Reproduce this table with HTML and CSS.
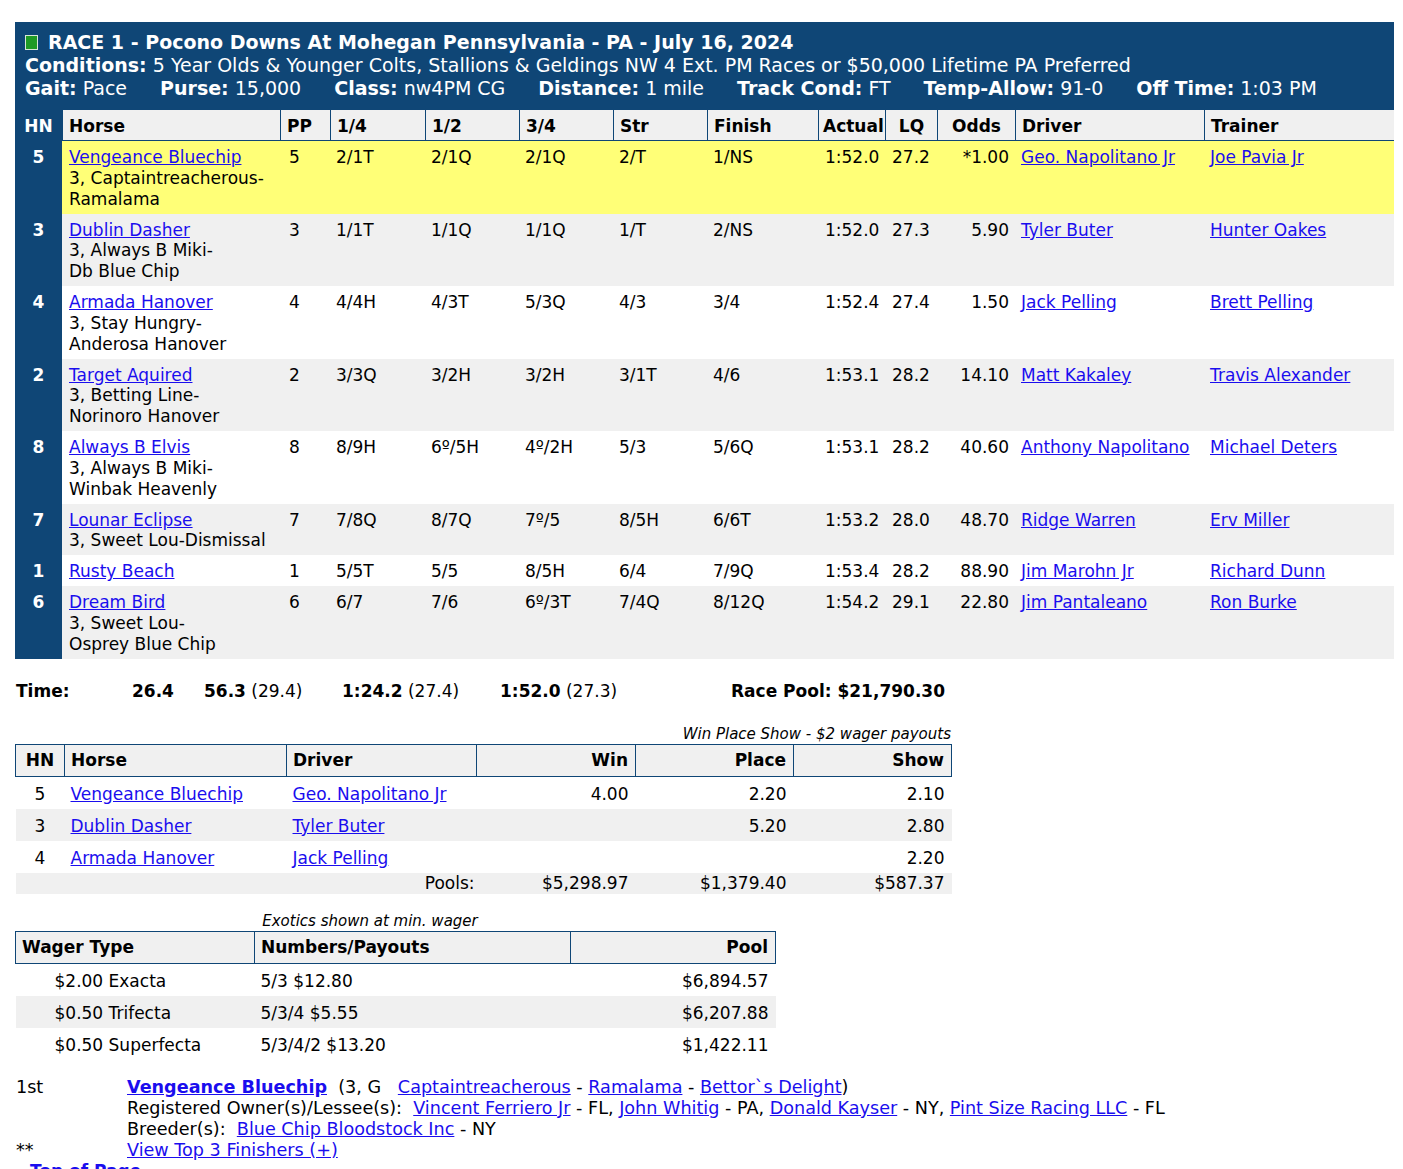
FILE: index.html
```html
<!DOCTYPE html>
<html lang="en">
<head>
<meta charset="utf-8">
<title>Race 1 - Pocono Downs At Mohegan Pennsylvania</title>
<link rel="stylesheet" href="styles.css">
</head>
<body>
<div class="page">
  <div class="race">
    <div class="race-head">
      <div class="title"><span class="flag"></span><span>RACE 1 - Pocono Downs At Mohegan Pennsylvania - PA - July 16, 2024</span></div>
      <div><b>Conditions:</b> 5 Year Olds &amp; Younger Colts, Stallions &amp; Geldings NW 4 Ext. PM Races or $50,000 Lifetime PA Preferred</div>
      <div class="facts">
        <span><b>Gait:</b> Pace</span>
        <span><b>Purse:</b> 15,000</span>
        <span><b>Class:</b> nw4PM CG</span>
        <span><b>Distance:</b> 1 mile</span>
        <span><b>Track Cond:</b> FT</span>
        <span><b>Temp-Allow:</b> 91-0</span>
        <span><b>Off Time:</b> 1:03 PM</span>
      </div>
    </div>
    <table class="results">
      <colgroup>
        <col class="c-hn"><col class="c-horse"><col class="c-pp"><col class="c-q"><col class="c-h"><col class="c-t"><col class="c-str"><col class="c-fin"><col class="c-act"><col class="c-lq"><col class="c-odds"><col class="c-drv"><col class="c-trn">
      </colgroup>
      <thead>
        <tr>
          <th class="hn">HN</th><th>Horse</th><th>PP</th><th>1/4</th><th>1/2</th><th>3/4</th><th>Str</th><th>Finish</th><th class="tight">Actual</th><th class="center">LQ</th><th class="center">Odds</th><th>Driver</th><th>Trainer</th>
        </tr>
      </thead>
      <tbody>
        <tr class="win">
          <td class="hn">5</td>
          <td><a href="#">Vengeance Bluechip</a><br>3, Captaintreacherous-<span class="dam">Ramalama</span></td>
          <td class="pp">5</td><td>2/1T</td><td>2/1Q</td><td>2/1Q</td><td>2/T</td><td>1/NS</td><td class="act">1:52.0</td><td class="lq">27.2</td><td class="odds">*1.00</td>
          <td><a href="#">Geo. Napolitano Jr</a></td><td><a href="#">Joe Pavia Jr</a></td>
        </tr>
        <tr class="alt">
          <td class="hn">3</td>
          <td><a href="#">Dublin Dasher</a><br>3, Always B Miki-<span class="dam">Db Blue Chip</span></td>
          <td class="pp">3</td><td>1/1T</td><td>1/1Q</td><td>1/1Q</td><td>1/T</td><td>2/NS</td><td class="act">1:52.0</td><td class="lq">27.3</td><td class="odds">5.90</td>
          <td><a href="#">Tyler Buter</a></td><td><a href="#">Hunter Oakes</a></td>
        </tr>
        <tr>
          <td class="hn">4</td>
          <td><a href="#">Armada Hanover</a><br>3, Stay Hungry-<span class="dam">Anderosa Hanover</span></td>
          <td class="pp">4</td><td>4/4H</td><td>4/3T</td><td>5/3Q</td><td>4/3</td><td>3/4</td><td class="act">1:52.4</td><td class="lq">27.4</td><td class="odds">1.50</td>
          <td><a href="#">Jack Pelling</a></td><td><a href="#">Brett Pelling</a></td>
        </tr>
        <tr class="alt">
          <td class="hn">2</td>
          <td><a href="#">Target Aquired</a><br>3, Betting Line-<span class="dam">Norinoro Hanover</span></td>
          <td class="pp">2</td><td>3/3Q</td><td>3/2H</td><td>3/2H</td><td>3/1T</td><td>4/6</td><td class="act">1:53.1</td><td class="lq">28.2</td><td class="odds">14.10</td>
          <td><a href="#">Matt Kakaley</a></td><td><a href="#">Travis Alexander</a></td>
        </tr>
        <tr>
          <td class="hn">8</td>
          <td><a href="#">Always B Elvis</a><br>3, Always B Miki-<span class="dam">Winbak Heavenly</span></td>
          <td class="pp">8</td><td>8/9H</td><td>6º/5H</td><td>4º/2H</td><td>5/3</td><td>5/6Q</td><td class="act">1:53.1</td><td class="lq">28.2</td><td class="odds">40.60</td>
          <td><a href="#">Anthony Napolitano</a></td><td><a href="#">Michael Deters</a></td>
        </tr>
        <tr class="alt">
          <td class="hn">7</td>
          <td><a href="#">Lounar Eclipse</a><br>3, Sweet Lou-<span class="dam">Dismissal</span></td>
          <td class="pp">7</td><td>7/8Q</td><td>8/7Q</td><td>7º/5</td><td>8/5H</td><td>6/6T</td><td class="act">1:53.2</td><td class="lq">28.0</td><td class="odds">48.70</td>
          <td><a href="#">Ridge Warren</a></td><td><a href="#">Erv Miller</a></td>
        </tr>
        <tr>
          <td class="hn">1</td>
          <td><a href="#">Rusty Beach</a></td>
          <td class="pp">1</td><td>5/5T</td><td>5/5</td><td>8/5H</td><td>6/4</td><td>7/9Q</td><td class="act">1:53.4</td><td class="lq">28.2</td><td class="odds">88.90</td>
          <td><a href="#">Jim Marohn Jr</a></td><td><a href="#">Richard Dunn</a></td>
        </tr>
        <tr class="alt">
          <td class="hn">6</td>
          <td><a href="#">Dream Bird</a><br>3, Sweet Lou-<span class="dam">Osprey Blue Chip</span></td>
          <td class="pp">6</td><td>6/7</td><td>7/6</td><td>6º/3T</td><td>7/4Q</td><td>8/12Q</td><td class="act">1:54.2</td><td class="lq">29.1</td><td class="odds">22.80</td>
          <td><a href="#">Jim Pantaleano</a></td><td><a href="#">Ron Burke</a></td>
        </tr>
      </tbody>
    </table>
  </div>

  <table class="times">
    <tr>
      <td class="t-label"><b>Time:</b></td>
      <td class="t-1"><b>26.4</b></td>
      <td class="t-2"><b>56.3</b> (29.4)</td>
      <td class="t-3"><b>1:24.2</b> (27.4)</td>
      <td class="t-4"><b>1:52.0</b> (27.3)</td>
      <td class="t-pool"><b>Race Pool: $21,790.30</b></td>
    </tr>
  </table>

  <div class="wps-caption">Win Place Show - $2 wager payouts</div>
  <table class="wps">
    <colgroup>
      <col class="w-hn"><col class="w-horse"><col class="w-drv"><col class="w-num"><col class="w-num2"><col class="w-num2">
    </colgroup>
    <thead>
      <tr><th class="center">HN</th><th>Horse</th><th>Driver</th><th class="num">Win</th><th class="num">Place</th><th class="num">Show</th></tr>
    </thead>
    <tbody>
      <tr><td class="center">5</td><td><a href="#">Vengeance Bluechip</a></td><td><a href="#">Geo. Napolitano Jr</a></td><td class="num">4.00</td><td class="num">2.20</td><td class="num">2.10</td></tr>
      <tr class="alt"><td class="center">3</td><td><a href="#">Dublin Dasher</a></td><td><a href="#">Tyler Buter</a></td><td class="num"></td><td class="num">5.20</td><td class="num">2.80</td></tr>
      <tr><td class="center">4</td><td><a href="#">Armada Hanover</a></td><td><a href="#">Jack Pelling</a></td><td class="num"></td><td class="num"></td><td class="num">2.20</td></tr>
      <tr class="alt pools"><td></td><td></td><td class="pools-label">Pools:</td><td class="num">$5,298.97</td><td class="num">$1,379.40</td><td class="num">$587.37</td></tr>
    </tbody>
  </table>

  <div class="ex-caption">Exotics shown at min. wager</div>
  <table class="exotics">
    <colgroup>
      <col class="e-type"><col class="e-num"><col class="e-pool">
    </colgroup>
    <thead>
      <tr><th>Wager Type</th><th>Numbers/Payouts</th><th class="num">Pool</th></tr>
    </thead>
    <tbody>
      <tr><td class="wager">$2.00 Exacta</td><td>5/3 $12.80</td><td class="num">$6,894.57</td></tr>
      <tr class="alt"><td class="wager">$0.50 Trifecta</td><td>5/3/4 $5.55</td><td class="num">$6,207.88</td></tr>
      <tr><td class="wager">$0.50 Superfecta</td><td>5/3/4/2 $13.20</td><td class="num">$1,422.11</td></tr>
    </tbody>
  </table>

  <div class="finishers">
    <div class="place">1st</div>
    <div><b><a href="#">Vengeance Bluechip</a></b>&nbsp;&nbsp;(3, G&nbsp;&nbsp; <a href="#">Captaintreacherous</a> - <a href="#">Ramalama</a> - <a href="#">Bettor`s Delight</a>)</div>
    <div class="place"></div>
    <div>Registered Owner(s)/Lessee(s):&nbsp; <a href="#">Vincent Ferriero Jr</a> - FL, <a href="#">John Whitig</a> - PA, <a href="#">Donald Kayser</a> - NY, <a href="#">Pint Size Racing LLC</a> - FL</div>
    <div class="place"></div>
    <div>Breeder(s):&nbsp; <a href="#">Blue Chip Bloodstock Inc</a> - NY</div>
    <div class="place">**</div>
    <div><a href="#">View Top 3 Finishers (+)</a></div>
  </div>
  <div class="toplink"><b><a href="#">Top of Page</a></b></div>
</div>
</body>
</html>
```
FILE: styles.css
```css
html, body {
  margin: 0;
  padding: 0;
  background: #ffffff;
}

body {
  font-family: "DejaVu Sans", Verdana, sans-serif;
  font-size: 17px;
  line-height: 21px;
  color: #000000;
}

a {
  color: #1a0dee;
  text-decoration: underline;
}

.page {
  padding: 22px 0 0 15px;
}

/* ---------- race box ---------- */
.race {
  width: 1379px;
  background: #0f4676;
}

.race-head {
  color: #ffffff;
  font-size: 19px;
  line-height: 23px;
  padding: 9px 10px 10px 10px;
}

.title {
  display: flex;
  align-items: center;
  gap: 10px;
  font-weight: bold;
}

.flag {
  display: inline-block;
  width: 11px;
  height: 13px;
  background: #1f9a25;
  border: 1px solid #d8e6d8;
}

.facts {
  display: flex;
  gap: 33px;
}

.results {
  width: 1379px;
  table-layout: fixed;
  border-collapse: separate;
  border-spacing: 0;
}

.c-hn { width: 47px; }
.c-horse { width: 218px; }
.c-pp { width: 50px; }
.c-q { width: 95px; }
.c-h { width: 94px; }
.c-t { width: 94px; }
.c-str { width: 94px; }
.c-fin { width: 111px; }
.c-act { width: 67px; }
.c-lq { width: 52px; }
.c-odds { width: 78px; }
.c-drv { width: 189px; }
.c-trn { width: 190px; }

.results th {
  background: #f0f0f0;
  text-align: left;
  font-weight: bold;
  line-height: 21px;
  padding: 6px 6px 3px 6px;
  border-left: 1px solid #0f4676;
  border-bottom: 1px solid #0f4676;
  white-space: nowrap;
}

.results th.hn {
  background: #0f4676;
  color: #ffffff;
  text-align: center;
  border-left: none;
  padding-left: 0;
  padding-right: 0;
}

.results th.tight {
  padding-left: 4px;
  padding-right: 0;
}

.results th.center {
  text-align: center;
}

.results td {
  vertical-align: top;
  line-height: 20.75px;
  padding: 6px 6px 4.25px 6px;
  background: #ffffff;
}

.results td.hn {
  background: #0f4676;
  color: #ffffff;
  font-weight: bold;
  text-align: center;
  padding-left: 0;
  padding-right: 0;
}

.results tr.win td:not(.hn) {
  background: #ffff77;
}

.results tr.alt td:not(.hn) {
  background: #f0f0f0;
}

.results td:nth-child(2) {
  padding-left: 7px;
}

.results td.pp {
  padding-left: 9px;
}

.results td.act {
  padding-left: 7px;
  padding-right: 0;
}

.results td.lq {
  padding-left: 7px;
}

.results td.odds {
  text-align: right;
  padding-right: 6px;
}

.dam {
  white-space: nowrap;
}

/* ---------- times ---------- */
.times {
  margin-top: 22px;
  width: 936px;
  border-collapse: collapse;
}

.times td {
  padding: 0 1px;
  white-space: nowrap;
}

.t-label { width: 114px; }
.t-1 { width: 70px; }
.t-2 { width: 136px; }
.t-3 { width: 156px; }
.t-4 { width: 226px; }

.times td.t-pool {
  text-align: right;
  padding-right: 6px;
}

/* ---------- win place show ---------- */
.wps-caption {
  margin-top: 21px;
  padding-top: 2px;
  width: 936px;
  text-align: right;
  font-style: italic;
  font-size: 15px;
  line-height: 19px;
}

.wps,
.exotics {
  border-collapse: collapse;
  table-layout: fixed;
}

.wps {
  width: 936px;
}

.w-hn { width: 49px; }
.w-horse { width: 222px; }
.w-drv { width: 190px; }
.w-num { width: 159px; }
.w-num2 { width: 158px; }

.wps th,
.exotics th {
  background: #f0f0f0;
  border: 1px solid #0f4676;
  text-align: left;
  font-weight: bold;
  padding: 5px 6px 5px 6px;
  white-space: nowrap;
}

.wps td,
.exotics td {
  padding: 7px 6px 4px 6px;
  white-space: nowrap;
}

.wps th.center,
.wps td.center {
  text-align: center;
}

.wps th.num,
.wps td.num,
.exotics th.num,
.exotics td.num {
  text-align: right;
  padding-right: 7px;
}

.wps tr.alt td,
.exotics tr.alt td {
  background: #f0f0f0;
}

.wps tr.pools td {
  padding-top: 0;
  padding-bottom: 0;
}

.wps td.pools-label {
  text-align: right;
  padding-right: 2px;
}

/* ---------- exotics ---------- */
.ex-caption {
  margin-top: 16px;
  padding-top: 2px;
  width: 760px;
  padding-right: 50px;
  box-sizing: border-box;
  text-align: center;
  font-style: italic;
  font-size: 15px;
  line-height: 19px;
}

.exotics {
  width: 760px;
}

.e-type { width: 239px; }
.e-num { width: 316px; }
.e-pool { width: 205px; }

.exotics td.wager {
  padding-left: 39px;
}

/* ---------- finishers ---------- */
.finishers {
  margin-top: 17px;
  display: grid;
  grid-template-columns: 111px auto;
  padding-left: 1px;
  font-size: 17.6px;
}

.toplink {
  padding-left: 15px;
}
```
